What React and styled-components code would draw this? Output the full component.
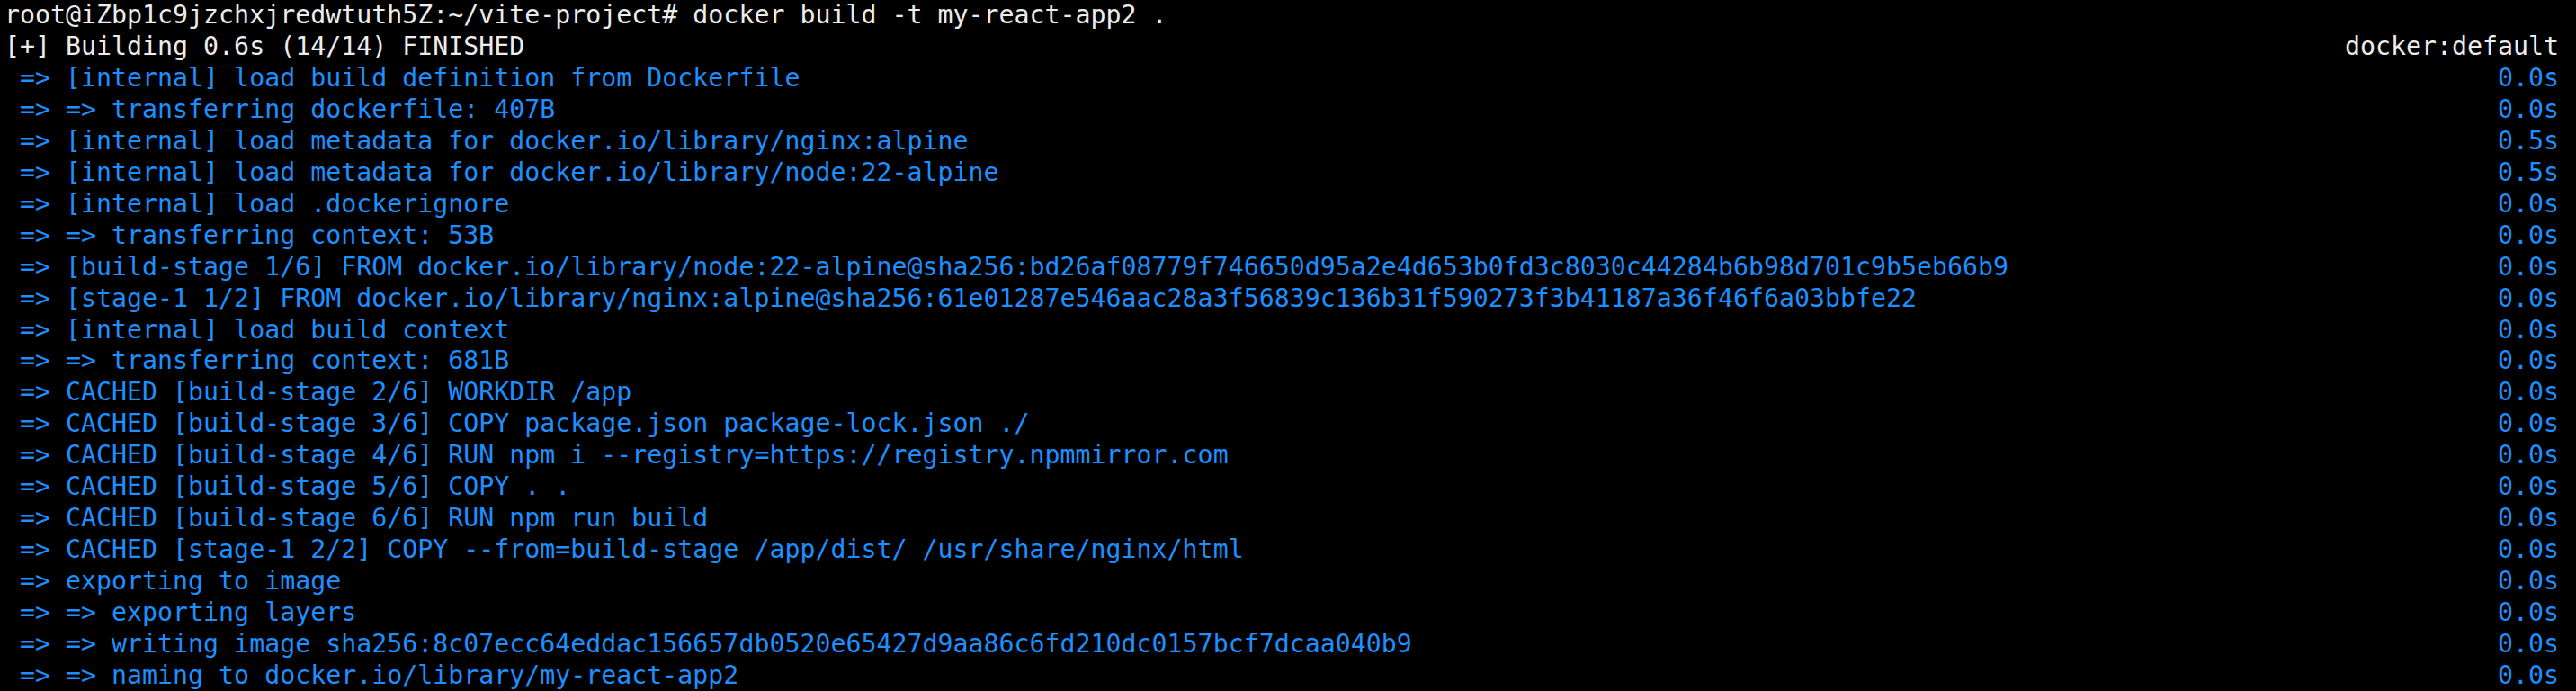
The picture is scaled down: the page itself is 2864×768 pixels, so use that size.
import React from "react";
import styled, { createGlobalStyle } from "styled-components";

const GlobalStyle = createGlobalStyle`
    html, body {
        margin: 0;
        padding: 0;
        background: #000;
    }
`
const Terminal = styled.div`
    width: 2864px;
    height: 768px;
    box-sizing: border-box;
    padding: 0 19px 0 5px;
    background: #000;
    overflow: hidden;
    font-family: "DejaVu Sans Mono", monospace;
    font-size: 28.26px;
    line-height: 34.95px;
    white-space: pre;
`
const Linha = styled.div`
    display: flex;
    justify-content: space-between;
    color: ${props => props.cor === 'azul' ? '#1e8fff' : '#ececec'};
`

const passos = [
    [" => [internal] load build definition from Dockerfile", "0.0s"],
    [" => => transferring dockerfile: 407B", "0.0s"],
    [" => [internal] load metadata for docker.io/library/nginx:alpine", "0.5s"],
    [" => [internal] load metadata for docker.io/library/node:22-alpine", "0.5s"],
    [" => [internal] load .dockerignore", "0.0s"],
    [" => => transferring context: 53B", "0.0s"],
    [" => [build-stage 1/6] FROM docker.io/library/node:22-alpine@sha256:bd26af08779f746650d95a2e4d653b0fd3c8030c44284b6b98d701c9b5eb66b9", "0.0s"],
    [" => [stage-1 1/2] FROM docker.io/library/nginx:alpine@sha256:61e01287e546aac28a3f56839c136b31f590273f3b41187a36f46f6a03bbfe22", "0.0s"],
    [" => [internal] load build context", "0.0s"],
    [" => => transferring context: 681B", "0.0s"],
    [" => CACHED [build-stage 2/6] WORKDIR /app", "0.0s"],
    [" => CACHED [build-stage 3/6] COPY package.json package-lock.json ./", "0.0s"],
    [" => CACHED [build-stage 4/6] RUN npm i --registry=https://registry.npmmirror.com", "0.0s"],
    [" => CACHED [build-stage 5/6] COPY . .", "0.0s"],
    [" => CACHED [build-stage 6/6] RUN npm run build", "0.0s"],
    [" => CACHED [stage-1 2/2] COPY --from=build-stage /app/dist/ /usr/share/nginx/html", "0.0s"],
    [" => exporting to image", "0.0s"],
    [" => => exporting layers", "0.0s"],
    [" => => writing image sha256:8c07ecc64eddac156657db0520e65427d9aa86c6fd210dc0157bcf7dcaa040b9", "0.0s"],
    [" => => naming to docker.io/library/my-react-app2", "0.0s"],
]

export default function App() {
    return (
        <>
            <GlobalStyle />
            <Terminal>
                <Linha>
                    <span>root@iZbp1c9jzchxjredwtuth5Z:~/vite-project# docker build -t my-react-app2 .</span>
                </Linha>
                <Linha>
                    <span>[+] Building 0.6s (14/14) FINISHED</span>
                    <span>docker:default</span>
                </Linha>
                {passos.map(([texto, tempo], i) => (
                    <Linha key={i} cor="azul">
                        <span>{texto}</span>
                        <span>{tempo}</span>
                    </Linha>
                ))}
            </Terminal>
        </>
    )
}
